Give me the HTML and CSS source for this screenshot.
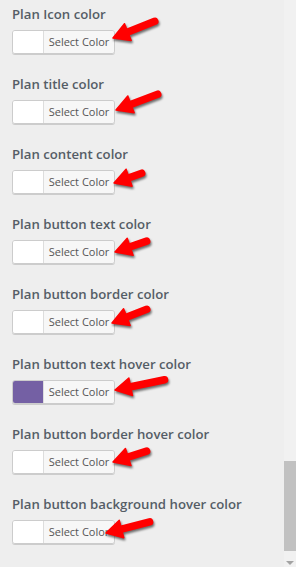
FILE: index.html
```html
<!DOCTYPE html>
<html>
<head>
  <meta charset="UTF-8">
  <title>Pricing Plan Colors</title>
  <link rel="stylesheet" href="styles.css">
</head>
<body>
  <div class="panel">
    <div class="settings">
      <div class="field">
        <label>Plan Icon color</label>
        <div class="picker"><span class="swatch"></span><button type="button">Select Color</button></div>
      </div>
      <div class="field">
        <label>Plan title color</label>
        <div class="picker"><span class="swatch"></span><button type="button">Select Color</button></div>
      </div>
      <div class="field">
        <label>Plan content color</label>
        <div class="picker"><span class="swatch"></span><button type="button">Select Color</button></div>
      </div>
      <div class="field">
        <label>Plan button text color</label>
        <div class="picker"><span class="swatch"></span><button type="button">Select Color</button></div>
      </div>
      <div class="field">
        <label>Plan button border color</label>
        <div class="picker"><span class="swatch"></span><button type="button">Select Color</button></div>
      </div>
      <div class="field">
        <label>Plan button text hover color</label>
        <div class="picker"><span class="swatch purple"></span><button type="button">Select Color</button></div>
      </div>
      <div class="field">
        <label>Plan button border hover color</label>
        <div class="picker"><span class="swatch"></span><button type="button">Select Color</button></div>
      </div>
      <div class="field">
        <label>Plan button background hover color</label>
        <div class="picker"><span class="swatch"></span><button type="button">Select Color</button></div>
      </div>
    </div>

    <div class="scrollbar">
      <div class="thumb"></div>
      <div class="scroll-down"></div>
    </div>

    <!-- red callout arrows drawn over the pickers -->
    <svg class="arrows" width="296" height="567" viewBox="0 0 296 567">
      <g transform="translate(113 38) rotate(-21.8)"><path d="M0 0 L16 -9 L16 9 Z"/><line x1="10" y1="0" x2="45" y2="0"/></g>
      <g transform="translate(116 110) rotate(-20.7)"><path d="M0 0 L16 -9 L16 9 Z"/><line x1="10" y1="0" x2="44.6" y2="0"/></g>
      <g transform="translate(114 183) rotate(-19.5)"><path d="M0 0 L16 -9 L16 9 Z"/><line x1="10" y1="0" x2="29.4" y2="0"/></g>
      <g transform="translate(115 252) rotate(-18.9)"><path d="M0 0 L16 -9 L16 9 Z"/><line x1="10" y1="0" x2="33.5" y2="0"/></g>
      <g transform="translate(112 323) rotate(-21.5)"><path d="M0 0 L16 -9 L16 9 Z"/><line x1="10" y1="0" x2="37.4" y2="0"/></g>
      <g transform="translate(115 390) rotate(-11.7)"><path d="M0 0 L16 -9 L16 9 Z"/><line x1="10" y1="0" x2="50.6" y2="0"/></g>
      <g transform="translate(113 462) rotate(-18)"><path d="M0 0 L16 -9 L16 9 Z"/><line x1="10" y1="0" x2="35.4" y2="0"/></g>
      <g transform="translate(106 533) rotate(-14.3)"><path d="M0 0 L16 -9 L16 9 Z"/><line x1="10" y1="0" x2="45" y2="0"/></g>
    </svg>
  </div>
</body>
</html>
```

FILE: styles.css
```css
body {
  margin: 0;
  background-color: #eeeeee;
  font-family: "Open Sans", "DejaVu Sans", sans-serif;
}
.panel {
  position: relative;
  display: flex;
  width: 296px;
  height: 567px;
  overflow: hidden;
}
.settings {
  flex-grow: 1;
  padding: 4px 0 0 12px;
}
.field {
  height: 70px;
}
label {
  display: block;
  height: 20px;
  margin-bottom: 6px;
  font-size: 13.2px;
  line-height: 20px;
  font-weight: 600;
  color: #555d66;
  white-space: nowrap;
}
.picker {
  display: flex;
  width: 103px;
  height: 24px;
  box-sizing: border-box;
  border: 1px solid #cccccc;
  border-radius: 3px;
  box-shadow: 0 1px 0 #cccccc;
  overflow: hidden;
}
.swatch {
  width: 30px;
  background-color: #ffffff;
  border-right: 1px solid #dddddd;
}
.swatch.purple {
  background-color: #7460a4;
}
.picker button {
  flex-grow: 1;
  padding: 0;
  border: none;
  background-color: #f7f7f7;
  color: #555555;
  font-family: "Open Sans", "DejaVu Sans", sans-serif;
  font-size: 11px;
  line-height: 22px;
  cursor: pointer;
}
.scrollbar {
  display: flex;
  flex-direction: column;
  justify-content: flex-end;
  width: 12px;
  background-color: #f1f1f1;
}
.thumb {
  height: 90px;
  margin-bottom: 10px;
  background-color: #c1c1c1;
}
.scroll-down {
  align-self: center;
  width: 0;
  height: 0;
  margin-bottom: 2px;
  border-left: 4px solid transparent;
  border-right: 4px solid transparent;
  border-top: 4px solid #a3a3a3;
}
.arrows {
  position: absolute;
  top: 0;
  left: 0;
  pointer-events: none;
  filter: drop-shadow(1.5px 2px 1px rgba(0, 0, 0, 0.55));
}
.arrows path {
  fill: #ff0000;
  stroke: #ff0000;
  stroke-width: 1.5;
  stroke-linejoin: round;
}
.arrows line {
  stroke: #ff0000;
  stroke-width: 7.5;
  stroke-linecap: round;
}
```
